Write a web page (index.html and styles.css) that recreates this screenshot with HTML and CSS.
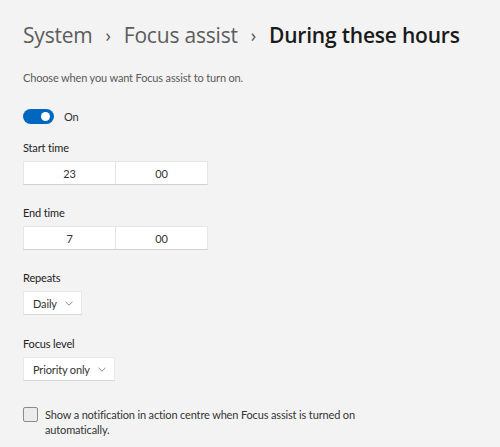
FILE: index.html
```html
<!DOCTYPE html>
<html>
<head>
<meta charset="utf-8">
<link rel="stylesheet" href="styles.css">
</head>
<body>
<div class="page">
  <h1 class="crumbs">
    <span class="crumb">System</span>
    <span class="sep">›</span>
    <span class="crumb">Focus assist</span>
    <span class="sep">›</span>
    <span class="crumb current">During these hours</span>
  </h1>
  <p class="intro">Choose when you want Focus assist to turn on.</p>

  <div class="toggle-row">
    <span class="toggle"><span class="knob"></span></span>
    <span class="toggle-label">On</span>
  </div>

  <div class="field">
    <div class="label">Start time</div>
    <div class="time">
      <span class="cell">23</span>
      <span class="cell">00</span>
    </div>
  </div>

  <div class="field">
    <div class="label">End time</div>
    <div class="time">
      <span class="cell">7</span>
      <span class="cell">00</span>
    </div>
  </div>

  <div class="field">
    <div class="label">Repeats</div>
    <div class="select">
      <span>Daily</span>
      <svg class="chev" width="8" height="5" viewBox="0 0 8 5"><path d="M0.5 0.8 L4 4.2 L7.5 0.8" fill="none" stroke="#888" stroke-width="1"/></svg>
    </div>
  </div>

  <div class="field">
    <div class="label">Focus level</div>
    <div class="select">
      <span>Priority only</span>
      <svg class="chev" width="8" height="5" viewBox="0 0 8 5"><path d="M0.5 0.8 L4 4.2 L7.5 0.8" fill="none" stroke="#888" stroke-width="1"/></svg>
    </div>
  </div>

  <div class="check-row">
    <span class="checkbox"></span>
    <span class="check-label">Show a notification in action centre when Focus assist is turned on automatically.</span>
  </div>
</div>
</body>
</html>
```

FILE: styles.css
```css
html, body {
  margin: 0;
  padding: 0;
  background: #f3f3f3;
}
body {
  font-family: "Lato", "Open Sans", sans-serif;
  color: #1b1b1b;
  letter-spacing: -0.15px;
}
.page {
  padding: 20px 0 0 23px;
  width: 477px;
}
.crumbs {
  margin: 0;
  font-family: "Open Sans", "Noto Sans", sans-serif;
  font-size: 21px;
  font-weight: 500;
  line-height: 30px;
  display: flex;
  align-items: center;
  gap: 13px;
  color: #5c5c5c;
  letter-spacing: -0.2px;
}
.crumb.current {
  color: #1a1a1a;
  font-weight: 600;
}
.sep {
  font-size: 18px;
  color: #555;
}
.intro {
  margin: 20px 0 0 0;
  font-size: 11px;
  line-height: 16px;
  color: #5a5a5a;
}
.toggle-row {
  margin-top: 22px;
  display: flex;
  align-items: center;
  gap: 10px;
  height: 16px;
}
.toggle {
  width: 31px;
  height: 15px;
  border-radius: 8px;
  background: #0067c0;
  position: relative;
  box-sizing: border-box;
}
.knob {
  position: absolute;
  right: 4px;
  top: 3px;
  width: 9px;
  height: 9px;
  border-radius: 50%;
  background: #fff;
}
.toggle-label {
  font-size: 11px;
  color: #333;
}
.field {
  margin-top: 16px;
}
.field + .field {
  margin-top: 20px;
}
.field + .field + .field + .field {
  margin-top: 21px;
}
.label {
  font-size: 11px;
  line-height: 16px;
  color: #222;
  margin-bottom: 5px;
}
.time {
  display: flex;
  width: 185px;
  height: 24px;
  background: #fff;
  border: 1px solid #e6e6e6;
  border-bottom-color: #d0d0d0;
  box-sizing: border-box;
}
.cell {
  flex: 1;
  display: flex;
  align-items: center;
  justify-content: center;
  font-size: 11px;
  color: #333;
}
.cell + .cell {
  border-left: 1px solid #e3e3e3;
}
.select {
  display: inline-flex;
  align-items: center;
  gap: 8px;
  height: 24px;
  padding: 0 8px 0 9px;
  background: #fff;
  border: 1px solid #e8e8e8;
  border-bottom-color: #d8d8d8;
  box-sizing: border-box;
  font-size: 11px;
  color: #333;
}
.chev {
  display: block;
}
.check-row {
  margin-top: 26px;
  display: flex;
  gap: 7px;
  align-items: flex-start;
}
.checkbox {
  flex: none;
  width: 15px;
  height: 15px;
  box-sizing: border-box;
  border: 1px solid #8a8a8a;
  border-radius: 2px;
  background: #ebebeb;
}
.check-label {
  font-size: 11px;
  line-height: 15px;
  color: #333;
  width: 330px;
}
```
